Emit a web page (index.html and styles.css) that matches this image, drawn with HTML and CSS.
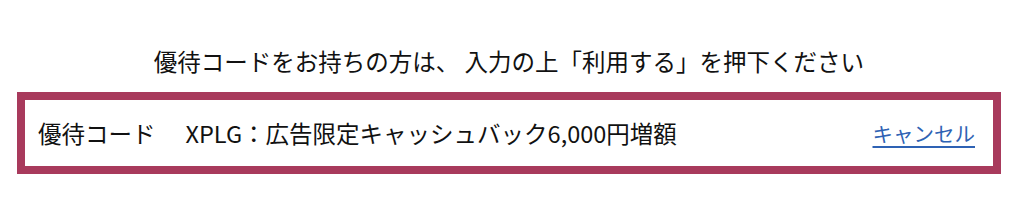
FILE: index.html
```html
<!DOCTYPE html>
<html lang="ja">
<head>
<meta charset="utf-8">
<link rel="stylesheet" href="styles.css">
</head>
<body>
<div class="wrap">
  <p class="lead">優待コードをお持ちの方は、 入力の上「利用する」を押下ください</p>
  <div class="coupon">
    <div class="info">
      <span class="label">優待コード</span>
      <span class="value">XPLG：広告限定キャッシュバック6,000円増額</span>
    </div>
    <a class="cancel" href="#">キャンセル</a>
  </div>
</div>
</body>
</html>
```
FILE: styles.css
```css
html, body {
  margin: 0;
  padding: 0;
  background: #fff;
}
body {
  font-family: "Noto Sans CJK JP", "Noto Sans", sans-serif;
  color: #111;
}
.wrap {
  padding: 45px 23px 0 17px;
}
.lead {
  margin: 0 0 14px;
  text-align: center;
  font-size: 23.5px;
  line-height: 33px;
  font-weight: 400;
}
.coupon {
  box-sizing: border-box;
  height: 82px;
  border: 8px solid #a83a5c;
  display: flex;
  align-items: center;
  justify-content: space-between;
  padding: 0 18px 0 13px;
}
.info {
  display: flex;
  align-items: center;
  gap: 30px;
  font-size: 23.5px;
  font-weight: 400;
}
.cancel {
  font-size: 20.5px;
  color: #2e62b4;
  text-decoration: underline;
  text-underline-offset: 4px;
  text-decoration-thickness: 2px;
}
```
